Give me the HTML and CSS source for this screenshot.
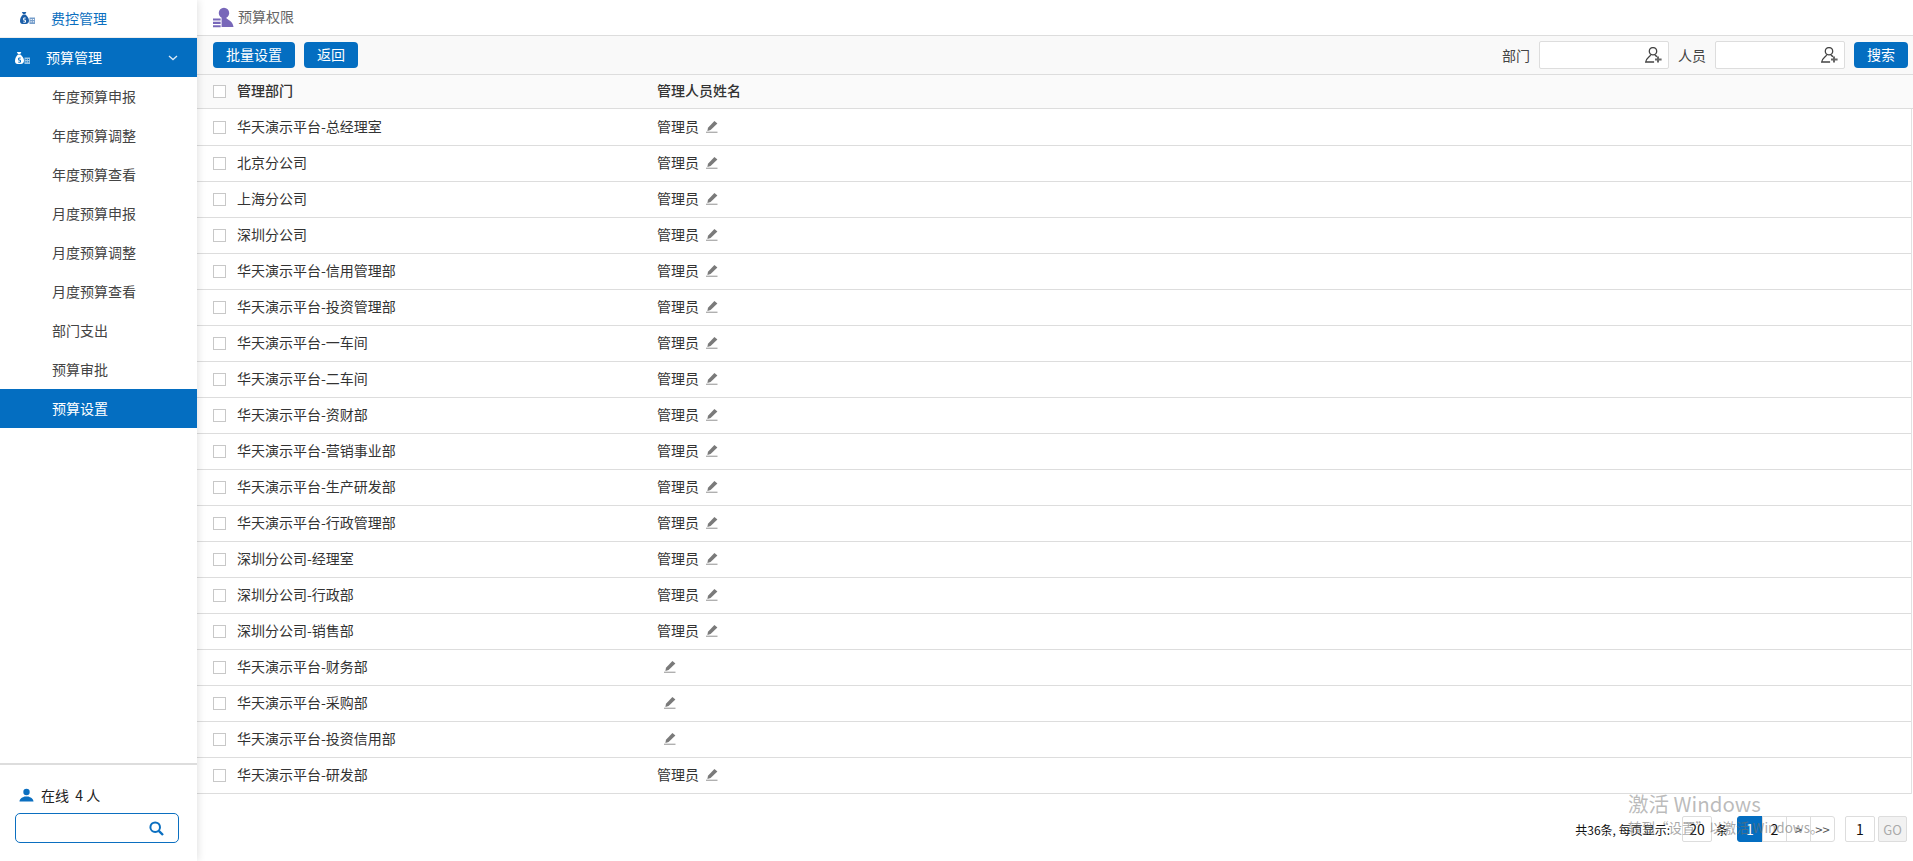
FILE: index.html
```html
<!DOCTYPE html>
<html lang="zh-CN">
<head>
<meta charset="utf-8">
<title>预算权限</title>
<link rel="stylesheet" href="styles.css">
</head>
<body>
<svg class="defs" width="0" height="0" aria-hidden="true">
  <symbol id="bag" viewBox="0 0 15 12">
    <path d="M1.800 0h4.600L5.300 2H3zM3 2.600h2.400C7.200 4 9 6.200 9 8.600 9 10.800 7.800 12 5.800 12H2.600C1 12 0 10.800 0 9 0 6.600 1.400 4 3 2.600z" fill="currentColor"/>
    <path d="M9.500 5.500H15V12H9.500z" fill="currentColor" opacity=".6"/>
    <path d="M5.700 6H3.700v2.200h1.800v2H3.300" stroke="var(--bagmark)" stroke-width="1" fill="none"/>
    <path d="M10.500 7.500h1.300M12.800 7.500h1.300M10.500 9.800h1.300M12.800 9.800h1.300" stroke="var(--bagmark)" stroke-width="1" fill="none"/>
  </symbol>
  <symbol id="useradd" viewBox="0 0 17 16">
    <circle cx="8" cy="4.200" r="3.700" fill="none" stroke="currentColor" stroke-width="1.300"/>
    <path d="M5.600 7.400C5.600 9.800 1.200 10.400.7 15h8.400M10 8c.6.8 1.400 1.300 2.200 1.700" fill="none" stroke="currentColor" stroke-width="1.300"/>
    <path d="M13 9.600v6M10 12.600h6.600" fill="none" stroke="#666" stroke-width="2"/>
  </symbol>
  <symbol id="pen" viewBox="0 0 12 12">
    <path d="M8.400 0l3 2.500L4.600 9 1.400 10l.6-3.200z" fill="#7a7a7a"/>
    <path d="M0 11.300h11.500" stroke="#b0b0b0" stroke-width="1.400" fill="none"/>
  </symbol>
</svg>
<div class="app">
  <aside class="sidebar">
    <nav class="menu">
      <a class="top-item"><svg class="bag bag-blue"><use href="#bag"/></svg><span>费控管理</span></a>
      <a class="group-item"><svg class="bag bag-white"><use href="#bag"/></svg><span>预算管理</span>
        <svg class="chevron" viewBox="0 0 10 6"><path d="M1 1l4 3.600L9 1" fill="none" stroke="#dbe9f6" stroke-width="1.300"/></svg></a>
      <a class="sub-item">年度预算申报</a>
      <a class="sub-item">年度预算调整</a>
      <a class="sub-item">年度预算查看</a>
      <a class="sub-item">月度预算申报</a>
      <a class="sub-item">月度预算调整</a>
      <a class="sub-item">月度预算查看</a>
      <a class="sub-item">部门支出</a>
      <a class="sub-item">预算审批</a>
      <a class="sub-item sub-active">预算设置</a>
    </nav>
    <div class="online">
      <div class="online-line">
        <svg class="online-icon" viewBox="0 0 16 14"><circle cx="8" cy="3.800" r="3.400" fill="#0b6fc0"/><path d="M.5 14c.2-3.600 3.600-4.400 5.600-5.400h3.800c2 1 5.400 1.800 5.600 5.400z" fill="#0b6fc0"/></svg>
        <span>在线&nbsp;&nbsp;4&nbsp;人</span>
      </div>
      <div class="online-search">
        <svg viewBox="0 0 15 15"><circle cx="6.200" cy="6.200" r="4.800" fill="none" stroke="#0b6fc0" stroke-width="2"/><path d="M9.800 9.800l4.200 4.200" stroke="#0b6fc0" stroke-width="2.400"/></svg>
      </div>
    </div>
  </aside>
  <main class="main">
    <header class="title-bar">
      <svg class="title-icon" viewBox="0 0 22 21"><circle cx="11.500" cy="5.700" r="5.500" fill="#7867b9"/><path d="M9 11h5c1 2 6.500 2.500 7.500 9.500H9z" fill="#7867b9"/><path d="M0 11.500h8v2.200H0zM0 15h8v2.200H0zM0 18.500h8v2.200H0z" fill="#7867b9"/></svg>
      <span>预算权限</span>
    </header>
    <div class="toolbar">
      <button class="btn">批量设置</button>
      <button class="btn btn-back">返回</button>
      <div class="filters">
        <label>部门</label>
        <div class="picker"><svg><use href="#useradd"/></svg></div>
        <label>人员</label>
        <div class="picker"><svg><use href="#useradd"/></svg></div>
        <button class="btn btn-search">搜索</button>
      </div>
    </div>
    <div class="table">
      <div class="row head"><i class="check"></i><div class="dept">管理部门</div><div class="mgr">管理人员姓名</div></div>
      <div class="row"><i class="check"></i><div class="dept">华天演示平台-总经理室</div><div class="mgr"><span>管理员</span><svg class="pen"><use href="#pen"/></svg></div></div>
      <div class="row"><i class="check"></i><div class="dept">北京分公司</div><div class="mgr"><span>管理员</span><svg class="pen"><use href="#pen"/></svg></div></div>
      <div class="row"><i class="check"></i><div class="dept">上海分公司</div><div class="mgr"><span>管理员</span><svg class="pen"><use href="#pen"/></svg></div></div>
      <div class="row"><i class="check"></i><div class="dept">深圳分公司</div><div class="mgr"><span>管理员</span><svg class="pen"><use href="#pen"/></svg></div></div>
      <div class="row"><i class="check"></i><div class="dept">华天演示平台-信用管理部</div><div class="mgr"><span>管理员</span><svg class="pen"><use href="#pen"/></svg></div></div>
      <div class="row"><i class="check"></i><div class="dept">华天演示平台-投资管理部</div><div class="mgr"><span>管理员</span><svg class="pen"><use href="#pen"/></svg></div></div>
      <div class="row"><i class="check"></i><div class="dept">华天演示平台-一车间</div><div class="mgr"><span>管理员</span><svg class="pen"><use href="#pen"/></svg></div></div>
      <div class="row"><i class="check"></i><div class="dept">华天演示平台-二车间</div><div class="mgr"><span>管理员</span><svg class="pen"><use href="#pen"/></svg></div></div>
      <div class="row"><i class="check"></i><div class="dept">华天演示平台-资财部</div><div class="mgr"><span>管理员</span><svg class="pen"><use href="#pen"/></svg></div></div>
      <div class="row"><i class="check"></i><div class="dept">华天演示平台-营销事业部</div><div class="mgr"><span>管理员</span><svg class="pen"><use href="#pen"/></svg></div></div>
      <div class="row"><i class="check"></i><div class="dept">华天演示平台-生产研发部</div><div class="mgr"><span>管理员</span><svg class="pen"><use href="#pen"/></svg></div></div>
      <div class="row"><i class="check"></i><div class="dept">华天演示平台-行政管理部</div><div class="mgr"><span>管理员</span><svg class="pen"><use href="#pen"/></svg></div></div>
      <div class="row"><i class="check"></i><div class="dept">深圳分公司-经理室</div><div class="mgr"><span>管理员</span><svg class="pen"><use href="#pen"/></svg></div></div>
      <div class="row"><i class="check"></i><div class="dept">深圳分公司-行政部</div><div class="mgr"><span>管理员</span><svg class="pen"><use href="#pen"/></svg></div></div>
      <div class="row"><i class="check"></i><div class="dept">深圳分公司-销售部</div><div class="mgr"><span>管理员</span><svg class="pen"><use href="#pen"/></svg></div></div>
      <div class="row"><i class="check"></i><div class="dept">华天演示平台-财务部</div><div class="mgr mgr-empty"><svg class="pen"><use href="#pen"/></svg></div></div>
      <div class="row"><i class="check"></i><div class="dept">华天演示平台-采购部</div><div class="mgr mgr-empty"><svg class="pen"><use href="#pen"/></svg></div></div>
      <div class="row"><i class="check"></i><div class="dept">华天演示平台-投资信用部</div><div class="mgr mgr-empty"><svg class="pen"><use href="#pen"/></svg></div></div>
      <div class="row"><i class="check"></i><div class="dept">华天演示平台-研发部</div><div class="mgr"><span>管理员</span><svg class="pen"><use href="#pen"/></svg></div></div>
    </div>
    <div class="pager">
      <span class="pager-info">共36条, 每页显示:</span>
      <span class="pager-size">20</span>
      <span class="pager-unit">条</span>
      <div class="pages">
        <span class="page page-on">1</span><span class="page">2</span><span class="page page-arrow">&gt;</span><span class="page page-arrow">&gt;&gt;</span>
      </div>
      <span class="pager-jump">1</span>
      <span class="pager-go">GO</span>
    </div>
  </main>
</div>
<div class="watermark">
  <div class="wm-title">激活 Windows</div>
  <div class="wm-sub">转到“设置”以激活 Windows。</div>
</div>
</body>
</html>
```
FILE: styles.css
```css
* { box-sizing: border-box; }
html, body { margin: 0; height: 100%; overflow: hidden; background: #fff; }
body {
  font-family: "Noto Sans CJK SC", "Noto Sans", sans-serif;
  font-size: 14px;
  color: #333;
}
.defs { position: absolute; }
.app { display: flex; height: 861px; }

/* sidebar */
.sidebar {
  width: 197px;
  flex: none;
  display: flex;
  flex-direction: column;
  background: #fff;
  box-shadow: 1px 0 8px rgba(0, 0, 0, .12);
  position: relative;
  z-index: 2;
}
.menu { flex: 1; display: flex; flex-direction: column; }
.top-item {
  height: 38px;
  display: flex;
  align-items: center;
  padding: 0 0 2px 20px;
  color: #0b6fc0;
  border-bottom: 1px solid #eee;
}
.top-item span { margin-left: 16px; }
.bag { width: 15px; height: 12px; flex: none; }
.bag-blue { color: #1b5ea8; --bagmark: #fff; }
.bag-white { color: #fff; --bagmark: #046ec1; margin-top: 2px; }
.group-item {
  height: 39px;
  display: flex;
  align-items: center;
  padding: 0 0 2px 15px;
  background: #046ec1;
  color: #fff;
}
.group-item span { margin-left: 16px; }
.chevron { width: 10px; height: 6px; margin: 2px 0 0 66px; }
.sub-item {
  height: 39px;
  flex: none;
  display: flex;
  align-items: center;
  padding: 0 0 2px 52px;
  color: #444;
}
.sub-active { background: #046ec1; color: #fff; }
.online {
  height: 98px;
  flex: none;
  border-top: 2px solid #ddd;
  padding: 16px 0 0 15px;
}
.online-line { display: flex; align-items: center; gap: 7px; height: 30px; padding: 0 0 2px 4px; color: #222; }
.online-icon { width: 15px; height: 14px; }
.online-search {
  width: 164px;
  height: 30px;
  border: 1px solid #0b6fc0;
  border-radius: 5px;
  display: flex;
  align-items: center;
  justify-content: flex-end;
  padding-right: 14px;
  margin-top: 2px;
}
.online-search svg { width: 15px; height: 15px; }

/* main */
.main { flex: 1; min-width: 0; display: flex; flex-direction: column; }
.title-bar {
  height: 36px;
  flex: none;
  display: flex;
  align-items: center;
  gap: 4px;
  padding: 0 0 3px 16px;
  border-bottom: 1px solid #ddd;
  color: #666;
}
.title-icon { width: 21px; height: 21px; margin-top: 2px; }
.toolbar {
  height: 39px;
  flex: none;
  display: flex;
  align-items: center;
  padding: 0 5px 0 16px;
  background: #f9f9f9;
  border-bottom: 1px solid #ddd;
}
.btn {
  height: 26px;
  padding: 0 0 2px;
  width: 82px;
  border: 0;
  border-radius: 4px;
  background: #046ec1;
  color: #fff;
  font: inherit;
  line-height: 24px;
}
.btn-back { width: 54px; margin-left: 9px; }
.btn-search { width: 54px; margin-left: 9px; }
.filters { margin-left: auto; display: flex; align-items: center; }
.filters label { color: #444; margin-right: 9px; }
.picker {
  width: 130px;
  height: 28px;
  margin-right: 9px;
  background: #fff;
  border: 1px solid #ddd;
  border-radius: 2px;
  display: flex;
  align-items: center;
  justify-content: flex-end;
  padding-right: 6px;
  color: #444;
}
.picker svg { width: 17px; height: 16px; }
.picker + label + .picker { margin-right: 0; }
.table { flex: none; border-right: 1px solid #e2e2e2; margin-right: 1px; }
.row {
  height: 36px;
  display: flex;
  align-items: center;
  padding-left: 16px;
  border-bottom: 1px solid #ddd;
}
.head + .row { height: 37px; }
.row.head { height: 34px; background: #fafafa; border-bottom: 1px solid #ddd; font-weight: 500; color: #333; margin-right: -2px; }
.check { width: 13px; height: 13px; flex: none; border: 1px solid #c8c8c8; background: #fff; }
.dept { width: 420px; margin: 0 0 3px 11px; flex: none; }
.mgr { display: flex; align-items: center; margin-bottom: 3px; }
.pen { width: 12px; height: 12px; margin: 2px 0 0 7px; flex: none; }

/* pager */
.pager {
  display: flex;
  align-items: center;
  justify-content: flex-end;
  height: 26px;
  margin-top: 22px;
  padding-right: 6px;
  font-size: 12px;
  color: #111;
}
.pager-info { margin-right: 12px; }
.pager-size, .pager-jump {
  width: 30px;
  height: 26px;
  border: 1px solid #ddd;
  border-radius: 2px;
  display: flex;
  align-items: center;
  justify-content: center;
  font-size: 14px;
}
.pager-unit { margin: 0 9px 0 4px; }
.pages { display: flex; margin-right: 10px; }
.page {
  width: 25px;
  height: 26px;
  margin-left: -1px;
  border: 1px solid #ddd;
  display: flex;
  align-items: center;
  justify-content: center;
  font-size: 14px;
}
.page:first-child { margin-left: 0; width: 26px; }
.page-on { background: #046ec1; border-color: #046ec1; color: #fff; border-radius: 3px 0 0 3px; }
.page-arrow { font-size: 13px; color: #555; }
.page:last-child { border-radius: 0 3px 3px 0; }
.pager-go {
  width: 29px;
  height: 26px;
  margin-left: 3px;
  border: 1px solid #ddd;
  background: #f2f2f2;
  border-radius: 2px;
  color: #aaa;
  font-size: 13px;
  display: flex;
  align-items: center;
  justify-content: center;
}

/* system overlay */
.watermark {
  position: absolute;
  left: 1628px;
  top: 789px;
  color: rgba(120, 120, 120, .5);
  pointer-events: none;
  z-index: 5;
  font-family: "Noto Sans CJK SC", "Noto Sans", sans-serif;
}
.wm-title { font-size: 20.500px; line-height: 28px; }
.wm-sub { font-size: 13.500px; line-height: 20px; color: rgba(110, 110, 110, .6); }
```
